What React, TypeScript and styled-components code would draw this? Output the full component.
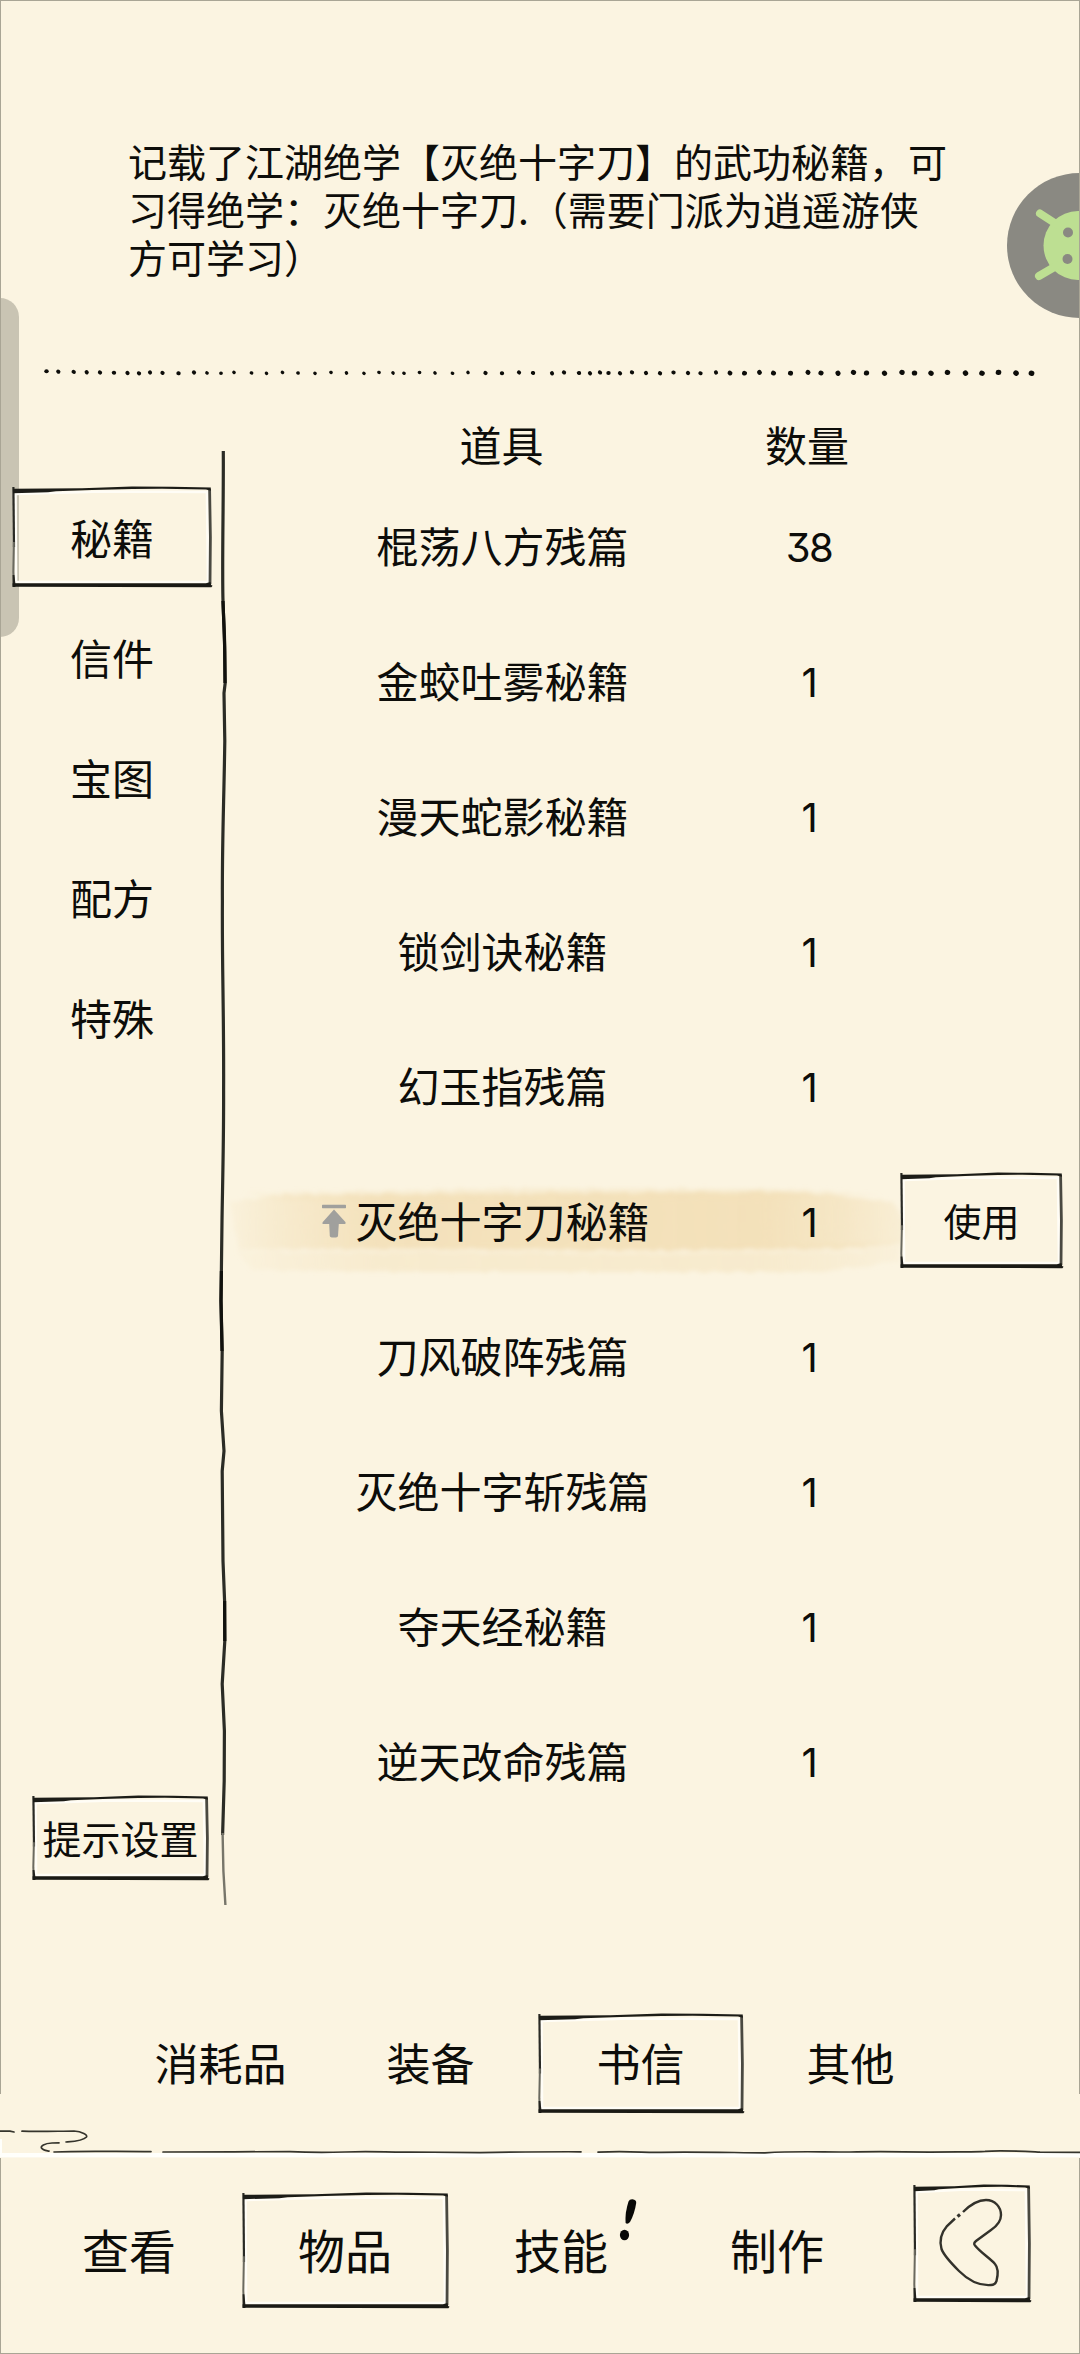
import React from "react";
import styled, { createGlobalStyle } from "styled-components";

const INK = "#0d0d0a";
const PAPER = "#fbf4e1";
const SANS = '"Noto Sans CJK SC", "Noto Sans", sans-serif';

const GlobalStyle = createGlobalStyle`
  *, *::before, *::after { box-sizing: border-box; }
  body { margin: 0; background: ${PAPER}; }
  button { border: 0; padding: 0; margin: 0; background: none; font: inherit; color: inherit; }
`;

const Page = styled.div`
  position: relative;
  width: 1080px;
  height: 2354px;
  overflow: hidden;
  display: flex;
  flex-direction: column;
  background: ${PAPER};
  color: ${INK};
  font-family: ${SANS};
  font-size: 42px;
`;

const PageEdge = styled.div<{ $top: number; $height: number; $bottom?: boolean }>`
  position: absolute;
  left: 0;
  right: 0;
  top: ${(p) => p.$top}px;
  height: ${(p) => p.$height}px;
  border: solid #a9a595;
  border-width: ${(p) => (p.$bottom ? "0 1px 1px 1px" : "1px 1px 0 1px")};
  pointer-events: none;
`;

const Description = styled.header`
  height: 360px;
  padding: 136px 0 0 128px;
  font-size: 39px;
  line-height: 48px;
`;

const Line = styled.div`
  white-space: nowrap;
`;

const Drawing = styled.svg`
  display: block;
  flex: none;
  overflow: visible;
`;

const Body = styled.main`
  display: flex;
  height: 1536px;
  flex: none;
`;

const Sidebar = styled.nav`
  width: 210px;
  padding: 103px 0 40px 12px;
  display: flex;
  flex-direction: column;
  gap: 20px;
`;

const Framed = styled.button<{ $w: number; $h: number; $size: number; $dy?: number }>`
  position: relative;
  flex: none;
  display: flex;
  align-items: center;
  justify-content: center;
  width: ${(p) => p.$w}px;
  height: ${(p) => p.$h}px;
  padding-bottom: ${(p) => p.$dy ?? 4}px;
  font-size: ${(p) => p.$size}px;
  line-height: 1;
  white-space: nowrap;
`;

const SettingsSlot = styled.div`
  margin-top: auto;
  padding-left: 20px;
`;

const FrameSvg = styled.svg`
  position: absolute;
  inset: 0;
  overflow: visible;
  pointer-events: none;
`;

const RuleSlot = styled.div`
  width: 30px;
  padding-top: 67px;
`;

const Table = styled.section`
  flex: 1;
  padding-top: 29px;
`;

const HeadRow = styled.div`
  display: grid;
  grid-template-columns: 523px 88px 1fr;
  height: 66.5px;
  align-items: center;
  text-align: center;
  line-height: 60px;
  padding-bottom: 4px;
`;

const Row = styled.div`
  position: relative;
  display: grid;
  grid-template-columns: 525px 88px 47px 1fr;
  height: 135px;
  align-items: center;
  text-align: center;
  line-height: 60px;
`;

const Name = styled.div`
  position: relative;
  padding-bottom: 5px;
`;

const Qty = styled.div`
  position: relative;
  padding-top: 2px;
  font-family: Inter, "Noto Sans", sans-serif;
  font-feature-settings: "cv09" 1;
  font-size: 40px;
  letter-spacing: -1.5px;
`;

const UseCell = styled.div`
  position: relative;
  grid-column: 4;
  padding-bottom: 3px;
`;

const BrushSvg = styled.svg`
  position: absolute;
  left: -18px;
  top: 26px;
  overflow: visible;
`;

const PinSvg = styled.svg`
  position: absolute;
  left: 82px;
  top: 14px;
`;

const Tabs = styled.nav`
  display: flex;
  gap: 5px;
  height: 193px;
  padding: 94px 0 0 118px;
  flex: none;
`;

const BottomNav = styled.nav`
  display: flex;
  gap: 10px;
  padding: 23px 0 0 26px;
`;

const BackSlot = styled.div`
  margin: -8px 0 0 23px;
`;

const AlertSvg = styled.svg`
  position: absolute;
  left: 161px;
  top: 5px;
`;

const EdgeHandle = styled.div`
  position: absolute;
  left: 0;
  top: 298px;
  width: 19px;
  height: 339px;
  border-radius: 0 19px 19px 0;
  background: #c9c4b3;
`;

const Assistant = styled.div`
  position: absolute;
  left: 1007px;
  top: 173px;
  width: 73px;
  height: 145px;
  overflow: hidden;
`;

function Frame({ w, h }: { w: number; h: number }) {
  return (
    <FrameSvg width={w} height={h} viewBox={`0 0 ${w} ${h}`}>
      <path
        d={`M3.5 7 L${w * 0.45} 4.5 L${w - 5} 5 L${w - 4} ${h - 5} L4 ${h - 5} Z`}
        fill="none"
        stroke="#fffdf6"
        strokeWidth="2.6"
      />
      <path d={`M1.4 0 L2 ${h * 0.6}`} stroke="#2a2a25" strokeWidth="2.2" fill="none" />
      <path d={`M1.9 ${h * 0.55} L1.3 ${h * 0.85} L2 ${h}`} stroke="#6b6a60" strokeWidth="2" fill="none" />
      <path d={`M0.6 ${h * 0.88} L2.4 ${h * 0.88} L3.4 ${h - 3} L3.4 ${h} L0.6 ${h} Z`} fill="#22221d" />
      <path d={`M${w - 2.4} 2 L${w - 1.6} ${h * 0.5} L${w - 2} ${h - 3}`} stroke="#4a4941" strokeWidth="2.8" fill="none" />
      <path
        d={`M1 1.8 L${w * 0.35} 1.2 L${w * 0.6} -0.4 L${w * 0.8} -0.2 L${w - 1.2} 0.6 L${w - 1.2} 3.8 L${w - 6} 2.6 L${w * 0.75} 1.7 L${w * 0.6} 2 L${w * 0.4} 3 L${w * 0.22} 4.2 L${w * 0.18} 5.2 L1 6.2 Z`}
        fill="#1c1c17"
      />
      <path
        d={`M0.6 ${h - 3.8} L${w - 6} ${h - 3.8} L${w - 1.6} ${h - 5} L${w - 0.8} ${h - 2} L${w + 0.6} ${h - 1.2} L${w - 0.6} ${h + 0.2} L0.6 ${h - 0.2} Z`}
        fill="#1a1a15"
      />
    </FrameSvg>
  );
}

const DOT_X = [
  46.5, 58.3, 73.7, 86.7, 100, 114, 127.5, 139, 150, 162.5, 178.5, 194, 207, 221, 234, 251.5, 266.5, 282.5, 298, 315,
  331, 346.5, 364, 379, 393, 404, 419.5, 435, 452.5, 468, 485.5, 502, 519, 533, 552, 564, 579, 590, 600,
  608.5, 620, 632, 646, 660, 673.5, 688, 700.5, 716, 730, 744.5, 759.5, 773.5, 790.5, 808, 821, 838, 853.5, 866.5, 884.5,
  902, 914.5, 931, 947.5, 965.5, 982, 998.5, 1016, 1031.5,
];

function DottedRule() {
  return (
    <Drawing width="1080" height="24" viewBox="0 0 1080 24">
      {DOT_X.map((x, i) => {
        const r = i < 12 ? 2 : i < 30 ? 1.7 : i < 48 ? 2 : 2.3 + (i - 48) * 0.02;
        const y = i < 6 ? 11.3 + i * 0.3 : 12.9 + Math.sin(i * 2.1) * 0.5;
        return (
          <ellipse key={x} cx={x} cy={y} rx={r + 0.2} ry={r} fill={INK} transform={`rotate(${(i * 37) % 60} ${x} ${y})`} />
        );
      })}
    </Drawing>
  );
}

function InkRule() {
  return (
    <Drawing width="30" height="1454" viewBox="0 0 30 1454" fill="none" stroke="#2b2b25">
      <path
        d="M13.3 0 C13.6 50 12.3 90 12.8 140 C13 165 15 180 14.6 200 L15.2 232 L14 242 L14.8 290 C14 350 12 390 12.4 450 C12 520 14 560 13.6 640 C13.8 690 12.4 740 12 770 L11 850 L12.2 900 L11.4 960 L14 1000 L12.2 1020 L13 1110 L14.6 1150 L14.8 1190 L12.2 1233 L14.4 1280 L14.2 1330 L12.6 1384"
        strokeWidth="3.2"
      />
      <path d="M12.6 1382 L13.4 1420 L15.4 1454" stroke="#77756a" strokeWidth="2.4" />
      <path d="M13 150 L14.8 200 L15 232 M11.4 820 L11 850 L12 900 M14.6 1150 L14.8 1190" stroke="#11110d" strokeWidth="3.2" />
    </Drawing>
  );
}

function CloudRule() {
  return (
    <Drawing width="1080" height="57" viewBox="0 0 1080 57" fill="none">
      <rect x="0" y="40" width="1080" height="4.4" fill="#fffffb" />
      <rect x="0" y="26" width="2" height="15" fill="#fffffb" />
      <g stroke="#35342c" strokeWidth="1.7" strokeLinecap="round">
        <path d="M0 18.2 L10 18.2 L14 19" />
        <path d="M22 18.2 C40 19 60 18 74 18 C82 18.4 88 22 86.5 24 C83 28 74 28.4 66 29" />
        <path d="M59 29.8 L52 30 C44 30.4 40.5 33 41.5 35 C43 37.5 46 37.6 49 38.2" />
        <path d="M54 39 C80 37.8 110 38.6 151 38.6" />
        <path d="M163 39 C200 38.6 250 39 290 38.6 C310 39.6 325 39.6 345 39 C370 37.8 390 39.4 410 39 L480 39.6 C520 39 550 38.6 581 38.8" />
        <path d="M598 39.2 C620 38 635 39 655 39.4 C690 38.4 740 39.8 765 39.8 C800 37.8 820 39.2 850 39 C880 38.2 900 38.6 930 39.2 C960 38.4 970 39.4 985 38.4 C1000 37 1020 38.2 1040 39.2 L1080 39.4" />
      </g>
    </Drawing>
  );
}

function Brush() {
  return (
    <BrushSvg width="690" height="100" viewBox="0 0 690 100">
      <defs>
        <linearGradient id="wash" x1="0" x2="690" y1="0" y2="0" gradientUnits="userSpaceOnUse">
          <stop offset="0" stopColor="#f3e0b8" stopOpacity="0.1" />
          <stop offset="0.08" stopColor="#f3e0b8" stopOpacity="0.45" />
          <stop offset="0.22" stopColor="#f3e0b8" stopOpacity="0.9" />
          <stop offset="0.78" stopColor="#f3e0b8" stopOpacity="0.95" />
          <stop offset="0.9" stopColor="#f3e0b8" stopOpacity="0.65" />
          <stop offset="1" stopColor="#f3e0b8" stopOpacity="0.25" />
        </linearGradient>
        <filter id="rough" x="-5%" y="-20%" width="110%" height="140%">
          <feTurbulence type="fractalNoise" baseFrequency="0.09 0.12" numOctaves="2" seed="4" />
          <feDisplacementMap in="SourceGraphic" scale="5" />
          <feGaussianBlur stdDeviation="2" />
        </filter>
      </defs>
      <g filter="url(#rough)">
        <path d="M8 20 L60 14 L560 11 L620 15 L672 22 L684 44 L680 62 L600 70 L16 68 Z" fill="url(#wash)" />
        <path d="M20 12 L300 7 L560 8 L660 13 L560 18 L60 20 Z" fill="url(#wash)" opacity="0.4" />
        <path d="M14 70 L180 66 L420 68 L680 60 L676 80 L600 91 L200 91 L30 89 Z" fill="url(#wash)" opacity="0.5" />
        <path d="M60 70 L200 69 L420 71 L640 69" stroke={PAPER} strokeWidth="3.5" opacity="0.55" fill="none" />
      </g>
    </BrushSvg>
  );
}

function PinTop() {
  return (
    <PinSvg width="24" height="34" viewBox="0 0 24 34" fill="#a0a09d">
      <rect x="0" y="0.8" width="24" height="3.4" rx="0.6" />
      <path d="M12 5.5 L23.4 18 C24 19.4 23.4 20 22.4 20 L16.8 20 L16 32 Q15.8 33.4 14 33.4 L9.8 33.4 Q8 33.4 7.8 32 L7.2 20 L1.6 20 C0.4 20 0 19.4 0.8 18 Z" />
    </PinSvg>
  );
}

const categories = ["秘籍", "信件", "宝图", "配方", "特殊"];
const items = [
  { name: "棍荡八方残篇", qty: 38 },
  { name: "金蛟吐雾秘籍", qty: 1 },
  { name: "漫天蛇影秘籍", qty: 1 },
  { name: "锁剑诀秘籍", qty: 1 },
  { name: "幻玉指残篇", qty: 1 },
  { name: "灭绝十字刀秘籍", qty: 1, active: true },
  { name: "刀风破阵残篇", qty: 1 },
  { name: "灭绝十字斩残篇", qty: 1 },
  { name: "夺天经秘籍", qty: 1 },
  { name: "逆天改命残篇", qty: 1 },
];
const tabs = ["消耗品", "装备", "书信", "其他"];
const sections = ["查看", "物品", "技能", "制作"];

export default function App() {
  return (
    <>
      <GlobalStyle />
      <Page>
        <Description>
          <Line>记载了江湖绝学【灭绝十字刀】的武功秘籍，可</Line>
          <Line>习得绝学：灭绝十字刀.（需要门派为逍遥游侠</Line>
          <Line>方可学习）</Line>
        </Description>
        <DottedRule />
        <EdgeHandle />
        <Body>
          <Sidebar>
            {categories.map((c, i) => (
              <Framed key={c} $w={200} $h={100} $size={42} $dy={1}>
                {i === 0 && <Frame w={200} h={100} />}
                {c}
              </Framed>
            ))}
            <SettingsSlot>
              <Framed $w={177} $h={84} $size={39} $dy={1}>
                <Frame w={177} h={84} />
                提示设置
              </Framed>
            </SettingsSlot>
          </Sidebar>
          <RuleSlot>
            <InkRule />
          </RuleSlot>
          <Table>
            <HeadRow>
              <div>道具</div>
              <div>数量</div>
            </HeadRow>
            {items.map((it) => (
              <Row key={it.name}>
                {it.active && <Brush />}
                <Name>
                  {it.active && <PinTop />}
                  {it.name}
                </Name>
                <Qty>{it.qty}</Qty>
                {it.active && (
                  <UseCell>
                    <Framed $w={163} $h={95} $size={38} $dy={2}>
                      <Frame w={163} h={95} />
                      使用
                    </Framed>
                  </UseCell>
                )}
              </Row>
            ))}
          </Table>
        </Body>
        <Tabs>
          {tabs.map((t) => (
            <Framed key={t} $w={205} $h={99} $size={44}>
              {t === "书信" && <Frame w={206} h={99} />}
              {t}
            </Framed>
          ))}
        </Tabs>
        <CloudRule />
        <BottomNav>
          {sections.map((s) => (
            <Framed key={s} $w={206} $h={115} $size={47}>
              {s === "物品" && <Frame w={207} h={115} />}
              {s}
              {s === "技能" && (
                <AlertSvg width="20" height="44" viewBox="0 0 20 44" fill="#080806">
                  <path d="M9.5 3.5 Q10.5 1 13.5 1.2 Q17.5 1.6 17.2 5 Q15.5 16 11 24 Q8.5 27 6.6 25 Q5.8 15 9.5 3.5 Z" />
                  <ellipse cx="5.500" cy="37" rx="4.6" ry="5.2" />
                </AlertSvg>
              )}
            </Framed>
          ))}
          <BackSlot>
            <Framed $w={118} $h={117} $size={20} aria-label="返回">
              <Frame w={118} h={117} />
              <FrameSvg width="118" height="117" viewBox="0 0 118 117" fill="none" stroke="#33322b" strokeWidth="2.4">
                <path d="M50 27 C58 19 66 15 73 15 C82 15 88 22 88 30 C88 37 84 41 78 45 L63 56 Q60 58.5 62 60.5 C68 68 77 73 82 79 C85.5 83 85 90 83.5 96 Q82 100 78 100 C66 101 56 96 46 86 C38 78 31 71 28.5 64 C26 55 28 48 34 41 L42 33.5" />
                <path d="M44.5 31.5 L47 29.5" strokeWidth="3.2" />
              </FrameSvg>
            </Framed>
          </BackSlot>
        </BottomNav>
        <Assistant>
          <svg width="73" height="145" viewBox="0 0 73 145">
            <circle cx="72.5" cy="72.5" r="72.5" fill="#8a8982" />
            <g fill="#bddf92">
              <circle cx="71" cy="72.5" r="34.5" />
              <path d="M33 40.5 L50 51.5 M32 103 L50 92.5" stroke="#bddf92" strokeWidth="8" strokeLinecap="round" />
            </g>
            <circle cx="61" cy="59.5" r="5" fill="#8a8982" />
            <circle cx="60.5" cy="86" r="5" fill="#8a8982" />
          </svg>
        </Assistant>
        <PageEdge $top={0} $height={2094} />
        <PageEdge $top={2158} $height={196} $bottom />
      </Page>
    </>
  );
}
